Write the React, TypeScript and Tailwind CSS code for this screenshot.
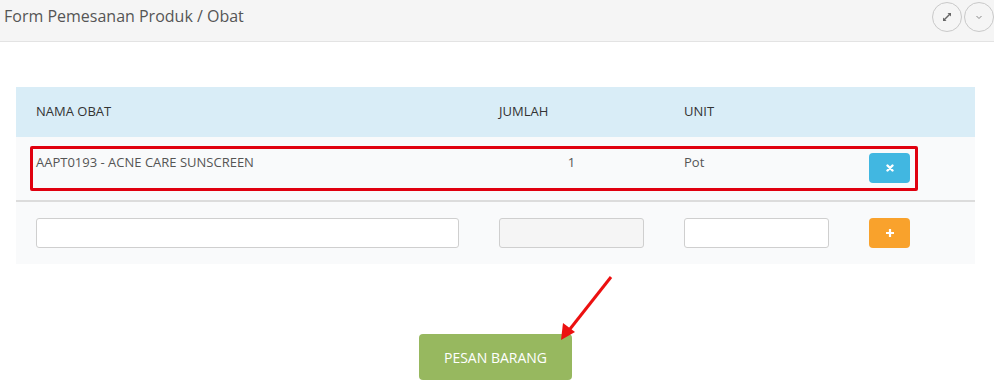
import React from "react";

export default function App() {
  return (
    <div
      className="relative w-[994px] h-[389px] bg-white overflow-hidden"
      style={{ fontFamily: '"Open Sans", "Liberation Sans", sans-serif' }}
    >
      {/* Header */}
      <div className="h-[42px] bg-[#f5f5f5] border-b border-[#e3e3e3] flex items-center justify-between pl-[4px]">
        <div className="text-[16px] text-[#555] leading-none -mt-[10px]">Form Pemesanan Produk / Obat</div>
        <div className="flex gap-[2px] self-start mt-[2px]">
          <div className="w-[30px] h-[30px] rounded-full border border-[#c9c9c9] flex items-center justify-center">
            <svg width="12" height="12" viewBox="0 0 12 12">
              <path d="M2.5 9.5 L9.5 2.5" stroke="#666" strokeWidth="1.4" />
              <path d="M6.5 2 L10 2 L10 5.5 Z" fill="#666" />
              <path d="M2 6.5 L2 10 L5.5 10 Z" fill="#666" />
            </svg>
          </div>
          <div className="w-[30px] h-[30px] rounded-full border border-[#c9c9c9] flex items-center justify-center">
            <svg width="10" height="10" viewBox="0 0 10 10">
              <path d="M2.5 4 L5 6.5 L7.5 4" stroke="#888" strokeWidth="1" fill="none" />
            </svg>
          </div>
        </div>
      </div>

      {/* Table */}
      <div className="mt-[45px] ml-[16px] w-[959px] text-[13px]">
        <div className="grid grid-cols-[463px_185px_185px_126px] h-[50px] bg-[#d9edf7] items-center text-[#333]">
          <div className="pl-[20px]">NAMA OBAT</div>
          <div className="pl-[20px]">JUMLAH</div>
          <div className="pl-[20px]">UNIT</div>
          <div></div>
        </div>
        <div className="grid grid-cols-[463px_185px_185px_126px] h-[65px] bg-[#f9fafb] items-center text-[#555] border-b-2 border-[#dcdcdc]">
          <div className="pl-[20px] -mt-[12px]">AAPT0193 - ACNE CARE SUNSCREEN</div>
          <div className="pl-[20px] pr-[20px] text-center -mt-[12px]">1</div>
          <div className="pl-[20px] -mt-[12px]">Pot</div>
          <div className="pl-[20px] -mt-[2px]">
            <div className="w-[41px] h-[30px] rounded-[4px] bg-[#41b7e1] flex items-center justify-center">
              <svg width="8" height="8" viewBox="0 0 8 8">
                <path d="M1.5 1.5 L6.5 6.5 M6.5 1.5 L1.5 6.5" stroke="white" strokeWidth="2.4" strokeLinecap="round" />
              </svg>
            </div>
          </div>
        </div>
        <div className="grid grid-cols-[463px_185px_185px_126px] h-[62px] bg-[#f9fafb] items-center">
          <div className="px-[20px]">
            <div className="h-[30px] rounded-[3px] border border-[#cfcfcf] bg-white"></div>
          </div>
          <div className="px-[20px]">
            <div className="h-[30px] rounded-[3px] border border-[#cfcfcf] bg-[#f5f5f5]"></div>
          </div>
          <div className="px-[20px]">
            <div className="h-[30px] rounded-[3px] border border-[#cfcfcf] bg-white"></div>
          </div>
          <div className="pl-[20px]">
            <div className="w-[41px] h-[30px] rounded-[4px] bg-[#f9a22c] flex items-center justify-center">
              <svg width="10" height="10" viewBox="0 0 10 10">
                <path d="M5 1 L5 9 M1 5 L9 5" stroke="white" strokeWidth="2.2" />
              </svg>
            </div>
          </div>
        </div>
      </div>

      {/* Submit button */}
      <div className="ml-[16px] w-[959px] flex justify-center mt-[70px]">
        <div className="w-[153px] h-[46px] rounded-[4px] bg-[#97b85f] text-white text-[14px] flex items-center justify-center">
          PESAN BARANG
        </div>
      </div>

      {/* Red annotation box */}
      <div className="absolute left-[30px] top-[146px] w-[888px] h-[45px] border-[3px] border-[#e0000f] rounded-[2px]"></div>

      {/* Red arrow */}
      <svg className="absolute left-0 top-0" width="994" height="389" viewBox="0 0 994 389">
        <line x1="611" y1="277" x2="570" y2="329" stroke="#ec1010" strokeWidth="3" />
        <path d="M561 340 L563 323 L575 332 Z" fill="#ec1010" />
      </svg>
    </div>
  );
}
